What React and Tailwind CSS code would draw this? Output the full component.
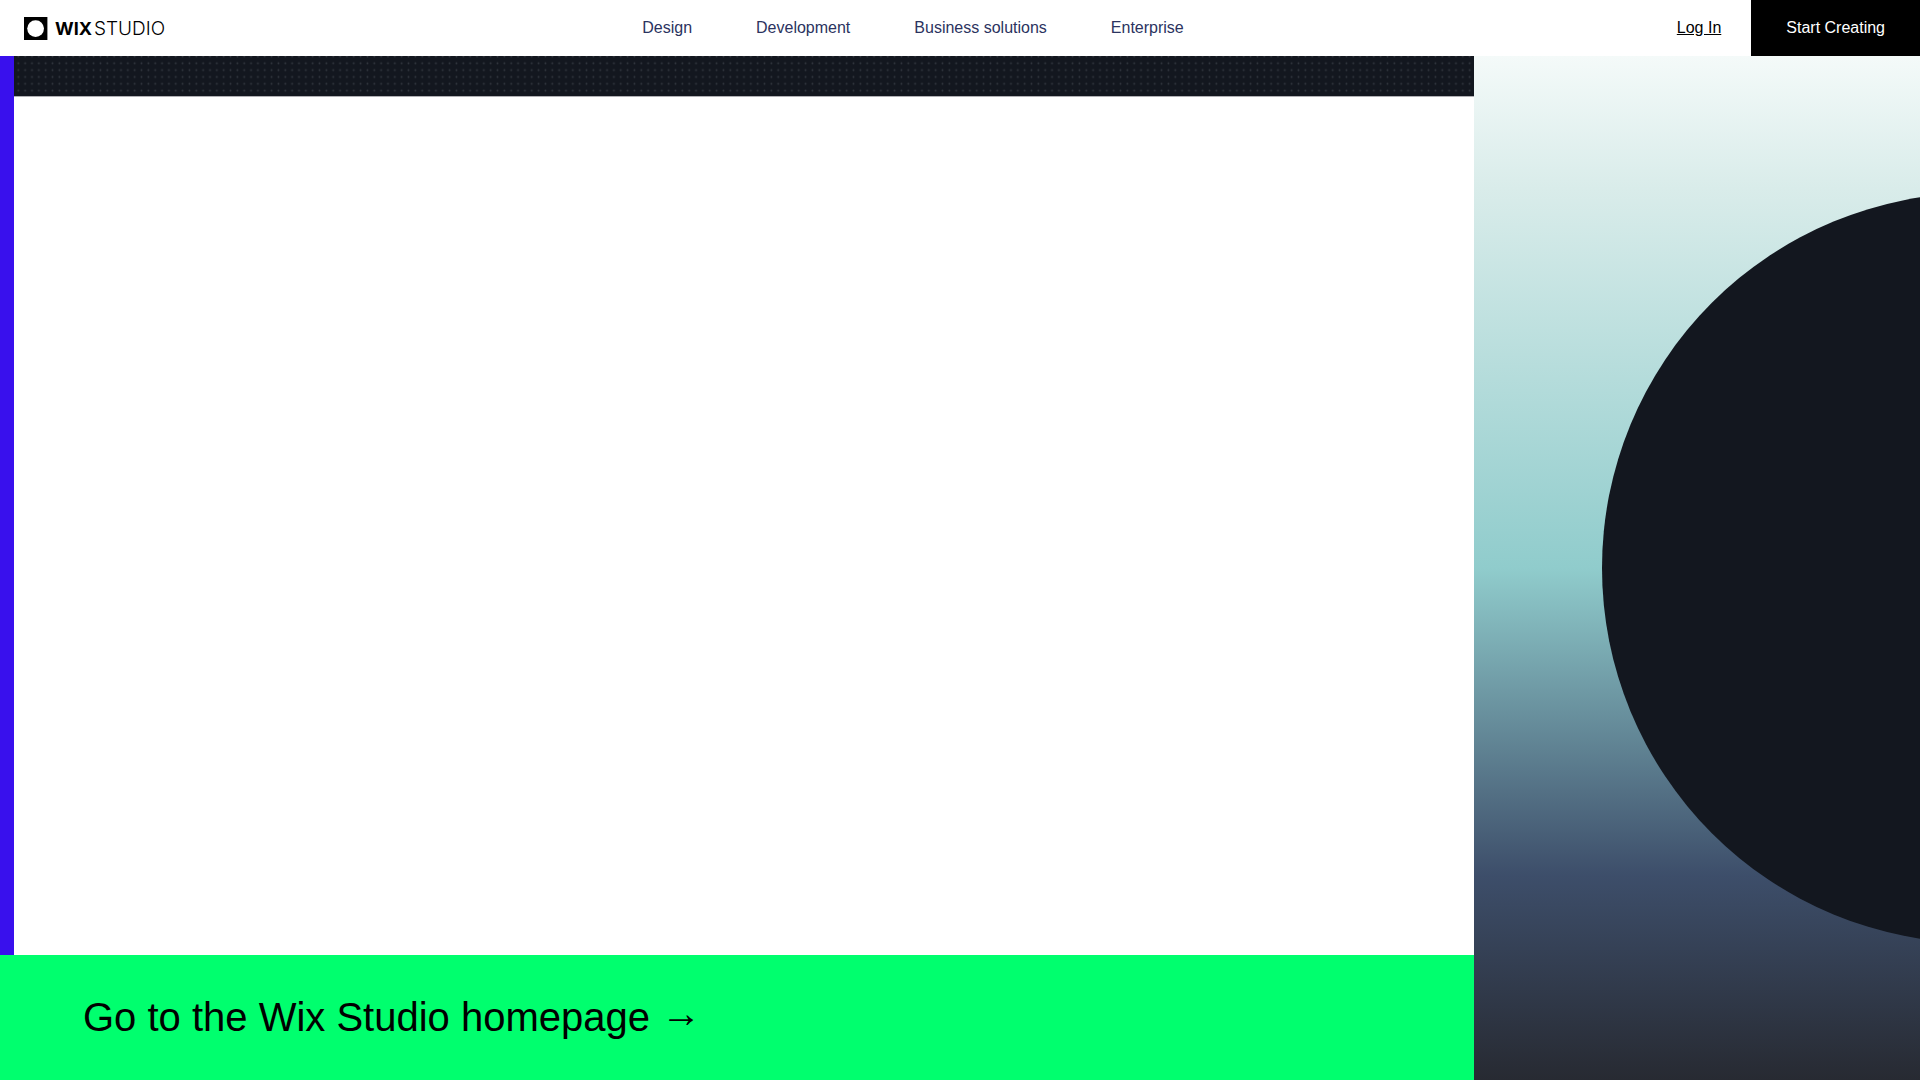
import React from 'react';

const navLinks = ['Design', 'Development', 'Business solutions', 'Enterprise'];

const Logo = () => (
  <a href="#" aria-label="Wix Studio" className="flex items-center pl-6 text-black">
    <svg width="24" height="24" viewBox="0 0 24 24" className="mr-[7px] shrink-0" aria-hidden="true">
      <rect y="1" width="23.4" height="23.2" fill="#000" />
      <circle cx="11.6" cy="12.6" r="8.4" fill="#fff" />
    </svg>
    <span className="flex items-baseline gap-[2px] pt-[2px] font-[Inter,sans-serif] leading-6">
      <span className="text-[18px] font-bold">WIX</span>
      <span className="text-[19px] font-light">STUDIO</span>
    </span>
  </a>
);

const Header = () => (
  <header className="flex h-14 items-stretch bg-white text-base">
    <Logo />
    <nav className="flex flex-1 items-center justify-center gap-16 text-[#2b3360]">
      {navLinks.map((label) => (
        <a key={label} href="#">{label}</a>
      ))}
    </nav>
    <a href="#" className="ml-4 mr-[30px] self-center text-black underline">Log In</a>
    <button type="button" className="bg-black px-[35px] text-white">Start Creating</button>
  </header>
);

const DotStrip = () => (
  <div className="h-[41px] border-b border-[#b0b0b4] bg-[#13171f]">
    <svg className="block h-full w-full" aria-hidden="true">
      <defs>
        <pattern id="dots" x="0.9" y="-3" width="6.846" height="6.846" patternUnits="userSpaceOnUse">
          <circle cx="3.4" cy="3.4" r="0.9" fill="#343941" />
        </pattern>
      </defs>
      <rect width="100%" height="100%" fill="url(#dots)" />
    </svg>
  </div>
);

const App = () => {
  return (
    <div className="flex min-h-screen flex-col bg-white font-['Liberation_Sans',Arial,sans-serif]">
      <Header />
      <main className="flex flex-1">
        <div className="flex flex-1 flex-col">
          <div className="flex-1 border-l-[14px] border-[#3910ed]">
            <DotStrip />
          </div>
          <a href="#" className="flex h-[125px] items-center gap-[11px] bg-[#00ff6e] px-[83px] pb-[2px] text-[40px] text-black">
            <span>Go to the Wix Studio homepage</span>
            <span className="pb-2">→</span>
          </a>
        </div>
        <aside className="relative w-[446px] overflow-hidden bg-[linear-gradient(180deg,#f4faf9_0%,#d9ecea_13%,#90cccc_50%,#3d4e6a_80%,#272a32_100%)]">
          <div className="absolute top-1/2 left-32 size-[750px] -translate-y-1/2 rounded-full bg-[#13171f]" />
        </aside>
      </main>
    </div>
  );
};

export default App;
